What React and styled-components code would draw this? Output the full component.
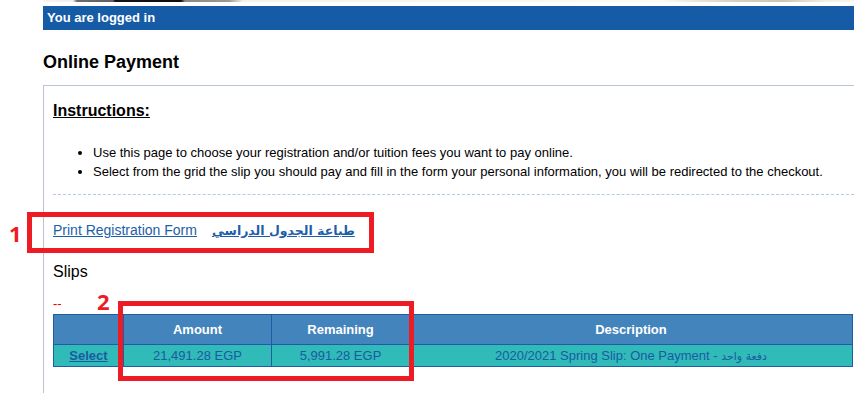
import React from "react";
import styled, { createGlobalStyle } from "styled-components";

const GlobalStyle = createGlobalStyle`
  html, body {
    margin: 0;
    padding: 0;
    background: #ffffff;
    overflow: hidden;
  }
  body {
    font-family: "Liberation Sans", Arial, "DejaVu Sans", sans-serif;
    color: #000;
  }
`;

const Page = styled.div`
  position: relative;
  width: 854px;
  height: 393px;
  overflow: hidden;
  padding-left: 43px;
  box-sizing: border-box;
`;

const PhotoStrip = styled.div`
  height: 2px;
  margin-bottom: 4px;
  background: linear-gradient(
    to right,
    #f4f4f2 0px,
    #f0f0ee 30px,
    #6c6c6c 34px,
    #606060 70px,
    #141414 72px,
    #0e0e0e 138px,
    #8a8a8a 142px,
    #9a9a98 186px,
    #f2f2f0 200px,
    #fafaf8 620px,
    #d4d2c2 690px,
    #c9c7b4 740px,
    #eeeee6 780px,
    #f6f6f4 811px
  );
`;

const LoginBar = styled.div`
  height: 24px;
  background: #155ba6;
  color: #ffffff;
  font-weight: bold;
  font-size: 13px;
  line-height: 24px;
  padding-left: 4px;
`;

const Title = styled.h2`
  margin: 22px 0 12px 0;
  font-size: 18px;
  font-weight: bold;
  line-height: 21px;
`;

const Panel = styled.div`
  border-top: 1px solid #b9c5d5;
  border-left: 1px solid #b9c5d5;
  padding: 16px 0 0 9px;
  height: 400px;
`;

const SectionHeading = styled.h3`
  margin: 0;
  font-size: 16px;
  font-weight: bold;
  line-height: 18px;
  text-decoration: underline;
`;

const Bullets = styled.ul`
  margin: 23px 0 0 0;
  padding-left: 40px;
  font-size: 13px;
  line-height: 19px;
  color: #000;
`;

const Divider = styled.hr`
  margin: 13px 0 0 0;
  border: none;
  border-top: 1px dashed #b6c9e0;
  height: 0;
`;

const LinkRow = styled.div`
  display: flex;
  align-items: baseline;
  gap: 15px;
  margin-top: 27px;
  font-size: 14px;
  line-height: 16px;
`;

const TextLink = styled.a`
  color: #1c5ea9;
  text-decoration: underline;
  cursor: pointer;
  font-weight: ${(p) => (p.$arabic ? "bold" : "normal")};
  font-family: ${(p) =>
    p.$arabic ? "\"DejaVu Sans\", \"Liberation Sans\", sans-serif" : "inherit"};
  font-size: ${(p) => (p.$arabic ? "12.5px" : "14px")};
`;

const SubHeading = styled.div`
  margin-top: 24px;
  font-size: 16px;
  line-height: 18px;
`;

const Note = styled.div`
  margin-top: 15px;
  color: #e00000;
  font-size: 13px;
  line-height: 15px;
`;

const Grid = styled.table`
  margin-top: 3px;
  width: 800px;
  border-collapse: collapse;
  table-layout: fixed;
  border: 1px solid #1f5ca5;
  font-size: 13px;
`;

const HeadCell = styled.th`
  height: 29px;
  padding: 0;
  background: #4484bc;
  color: #ffffff;
  font-weight: bold;
  text-align: center;
  border: 1px solid #1f5ca5;
`;

const BodyCell = styled.td`
  height: 21px;
  padding: 0;
  background: #30bab8;
  color: #1b5aa2;
  text-align: center;
  border: 1px solid #1f5ca5;
  white-space: nowrap;
`;

const SelectLink = styled.a`
  color: #1b5aa2;
  font-weight: bold;
  text-decoration: underline;
  cursor: pointer;
`;

const ArabicSmall = styled.span`
  font-family: "DejaVu Sans", sans-serif;
  font-size: 11px;
`;

const Callout = styled.div`
  position: absolute;
  box-sizing: border-box;
  border: 5px solid #ed1c24;
  left: ${(p) => p.$x}px;
  top: ${(p) => p.$y}px;
  width: ${(p) => p.$w}px;
  height: ${(p) => p.$h}px;
  pointer-events: none;
`;

const CalloutNumber = styled.div`
  position: absolute;
  left: ${(p) => p.$x}px;
  top: ${(p) => p.$y}px;
  color: #ed1c24;
  font-family: "Open Sans", "Liberation Sans", sans-serif;
  font-weight: bold;
  font-size: 22px;
  line-height: 22px;
`;

export default function App() {
  return (
    <>
      <GlobalStyle />
      <Page>
        <PhotoStrip />
        <LoginBar>You are logged in</LoginBar>
        <Title>Online Payment</Title>
        <Panel>
          <SectionHeading>Instructions:</SectionHeading>
          <Bullets>
            <li>
              Use this page to choose your registration and/or tuition fees you
              want to pay online.
            </li>
            <li>
              Select from the grid the slip you should pay and fill in the form
              your personal information, you will be redirected to the checkout.
            </li>
          </Bullets>
          <Divider />
          <LinkRow>
            <TextLink>Print Registration Form</TextLink>
            <TextLink $arabic dir="rtl">
              طباعة الجدول الدراسي
            </TextLink>
          </LinkRow>
          <SubHeading>Slips</SubHeading>
          <Note>--</Note>
          <Grid>
            <colgroup>
              <col style={{ width: "70px" }} />
              <col style={{ width: "148px" }} />
              <col style={{ width: "138px" }} />
              <col />
            </colgroup>
            <thead>
              <tr>
                <HeadCell />
                <HeadCell>Amount</HeadCell>
                <HeadCell>Remaining</HeadCell>
                <HeadCell>Description</HeadCell>
              </tr>
            </thead>
            <tbody>
              <tr>
                <BodyCell>
                  <SelectLink>Select</SelectLink>
                </BodyCell>
                <BodyCell>21,491.28 EGP</BodyCell>
                <BodyCell>5,991.28 EGP</BodyCell>
                <BodyCell>
                  2020/2021 Spring Slip: One Payment -{" "}
                  <ArabicSmall dir="rtl">دفعة واحد</ArabicSmall>
                </BodyCell>
              </tr>
            </tbody>
          </Grid>
        </Panel>
        <Callout $x={27} $y={212} $w={347} $h={41} />
        <CalloutNumber $x={9} $y={222}>1</CalloutNumber>
        <Callout $x={118} $y={301} $w={296} $h={80} />
        <CalloutNumber $x={97} $y={290}>2</CalloutNumber>
      </Page>
    </>
  );
}
